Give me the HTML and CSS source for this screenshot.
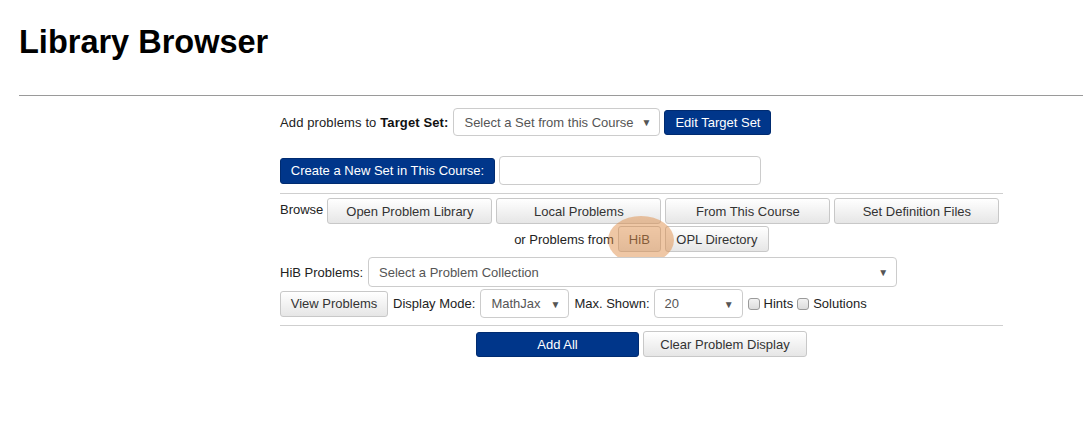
FILE: index.html
```html
<!DOCTYPE html>
<html>
<head>
<meta charset="utf-8">
<link rel="stylesheet" href="styles.css">
</head>
<body>
<div class="page">
  <h1 class="title">Library Browser</h1>
  <div class="rule"></div>
  <div class="panel">
    <div class="row row-target">
      <span class="label">Add problems to <b>Target Set:</b></span>
      <div class="select sel-target"><span>Select a Set from this Course</span><i class="caret">▼</i></div>
      <button class="btn blue btn-edit">Edit Target Set</button>
    </div>
    <div class="row row-create">
      <button class="btn blue btn-create">Create a New Set in This Course:</button>
      <div class="input"></div>
    </div>
    <div class="sep"></div>
    <div class="row row-browse">
      <span class="label">Browse</span>
      <button class="btn btn-browse">Open Problem Library</button>
      <button class="btn btn-browse">Local Problems</button>
      <button class="btn btn-browse">From This Course</button>
      <button class="btn btn-browse">Set Definition Files</button>
    </div>
    <div class="row row-from">
      <span class="label">or Problems from</span>
      <span class="hib-wrap">
        <button class="btn btn-hib">HiB</button>
        <span class="highlight"></span>
      </span>
      <button class="btn btn-opl">OPL Directory</button>
    </div>
    <div class="row row-coll">
      <span class="label">HiB Problems:</span>
      <div class="select sel-coll"><span>Select a Problem Collection</span><i class="caret">▼</i></div>
    </div>
    <div class="row row-view">
      <button class="btn btn-view">View Problems</button>
      <span class="label">Display Mode:</span>
      <div class="select sel-small"><span>MathJax</span><i class="caret">▼</i></div>
      <span class="label">Max. Shown:</span>
      <div class="select sel-small sel-max"><span>20</span><i class="caret">▼</i></div>
      <span class="check"></span><span class="label">Hints</span>
      <span class="check"></span><span class="label">Solutions</span>
    </div>
    <div class="sep"></div>
    <div class="row row-actions">
      <button class="btn blue btn-addall">Add All</button>
      <button class="btn btn-clear">Clear Problem Display</button>
    </div>
  </div>
</div>
</body>
</html>
```

FILE: styles.css
```css
html, body {
  margin: 0;
  padding: 0;
  background: #fff;
}
body {
  font-family: "Liberation Sans", Arial, sans-serif;
  font-size: 13px;
  color: #222;
}
.page {
  padding-left: 19px;
}
.title {
  margin: 24px 0 0;
  font-size: 32.5px;
  line-height: 37px;
  font-weight: bold;
  color: #000;
}
.rule {
  margin-top: 34px;
  height: 0;
  border-top: 1px solid #9a9a9a;
}
.panel {
  margin-left: 261px;
  width: 723px;
  padding-top: 11px;
}
.row {
  display: flex;
  align-items: center;
  gap: 4px;
}
.label {
  white-space: nowrap;
  color: #222;
}
.label b {
  color: #111;
}
.btn {
  font-family: "Liberation Sans", Arial, sans-serif;
  font-size: 13px;
  height: 26px;
  padding: 0 8px;
  border: 1px solid #c8c8c8;
  border-radius: 3px;
  background: linear-gradient(#ffffff, #e6e6e6);
  color: #333;
  white-space: nowrap;
  cursor: pointer;
  box-sizing: border-box;
}
.btn.blue {
  background: #00368a;
  border-color: #002b70;
  color: #fff;
}
.select {
  position: relative;
  box-sizing: border-box;
  display: flex;
  align-items: center;
  border: 1px solid #cccccc;
  border-radius: 4px;
  background: #fff;
  color: #555;
  padding: 0 10px;
  white-space: nowrap;
}
.caret {
  position: absolute;
  right: 8px;
  top: 50%;
  transform: translateY(-45%);
  font-style: normal;
  font-size: 10px;
  color: #555;
}
.row-target {
  height: 28px;
  margin-top: 1px;
}
.row-target .label {
  letter-spacing: 0.12px;
  margin-right: 1px;
}
.sel-target {
  width: 207px;
  height: 28px;
}
.btn-edit {
  width: 107px;
  height: 25px;
}
.row-create {
  margin-top: 20px;
  height: 29px;
}
.btn-create {
  width: 215px;
}
.input {
  width: 262px;
  height: 29px;
  box-sizing: border-box;
  border: 1px solid #cccccc;
  border-radius: 4px;
  background: #fff;
}
.sep {
  height: 0;
  border-top: 1px solid #cfcfcf;
}
.row-create + .sep {
  margin-top: 8px;
}
.row-browse {
  margin-top: 4px;
  align-items: flex-start;
}
.row-browse .label {
  line-height: 23px;
}
.btn-browse {
  width: 165px;
}
.row-from {
  margin-top: 2px;
  justify-content: center;
}
.hib-wrap {
  position: relative;
  display: inline-flex;
}
.btn-hib {
  width: 43px;
  padding: 0;
}
.highlight {
  position: absolute;
  left: -10px;
  top: -10px;
  width: 66px;
  height: 48px;
  border-radius: 50%;
  background: rgba(222, 138, 66, 0.48);
  pointer-events: none;
}
.btn-opl {
  width: 104px;
}
.row-coll {
  margin-top: 5px;
  gap: 5px;
}
.sel-coll {
  width: 529px;
  height: 30px;
}
.row-view {
  margin-top: 2px;
  gap: 5px;
}
.btn-view {
  width: 108px;
}
.sel-small {
  width: 89px;
  height: 29px;
}
.sel-max {
  margin-left: -1px;
}
.check {
  display: inline-block;
  width: 10px;
  height: 10px;
  border: 1px solid #9a9a9a;
  border-radius: 3px;
  background: linear-gradient(#f2f2f2, #dcdcdc);
}
.row-view .check + .label {
  margin-left: -1px;
}
.row-view .label + .check {
  margin-left: -1px;
}
.row-view + .sep {
  margin-top: 7px;
}
.row-actions {
  margin-top: 5px;
  justify-content: center;
}
.btn-addall {
  width: 163px;
  height: 25px;
}
.btn-clear {
  width: 164px;
}
```
